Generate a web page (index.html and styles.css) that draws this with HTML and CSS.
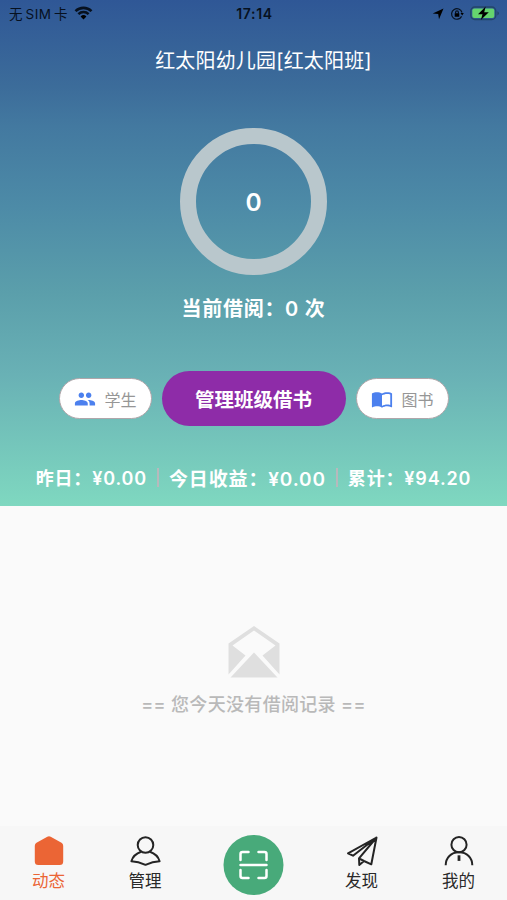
FILE: index.html
```html
<!DOCTYPE html>
<html lang="zh-CN">
<head>
<meta charset="utf-8">
<title>红太阳幼儿园</title>
<link rel="stylesheet" href="styles.css">
</head>
<body>
<div class="app">
  <section class="hero">
    <div class="status">
      <div class="carrier"><span>无 SIM 卡</span>
        <svg class="wifi" viewBox="0 0 18 14"><path d="M9 13.5 6.1 10.5a4.2 4.2 0 0 1 5.8 0Z"/><path class="arc" d="M3.9 8.1a7.4 7.4 0 0 1 10.2 0M1 5.1a11.5 11.5 0 0 1 16 0"/></svg>
      </div>
      <div class="clock">17:14</div>
      <div class="indicators">
        <svg width="12" height="12" viewBox="0 0 12 12"><path d="M11.5.5 7 11.3 6.2 6 .7 5.4Z"/></svg>
        <svg class="lock" width="14" height="14" viewBox="0 0 14 14"><path class="line" d="M11.6 9.4A5.3 5.3 0 1 1 12 5.5M5.6 6.5V5.2a1.4 1.4 0 0 1 2.8 0v1.3"/><path d="M4.7 6.3h4.6v3.5H4.7ZM10.5 6h3.3l-1.6 2.5Z"/></svg>
        <svg class="battery" width="30" height="15" viewBox="0 0 30 15"><rect class="case" x=".8" y="1" width="25" height="12.5" rx="4"/><rect class="charge" x="2.3" y="2.5" width="22" height="9.5" rx="2"/><path class="cap" d="M27.3 5.2q1.7.5 1.7 2.1t-1.7 2.1Z"/><path d="M15.7.5 8 8.3h4.5L10.8 14l8-7.8h-4.6Z"/></svg>
      </div>
    </div>
    <h1>红太阳幼儿园[红太阳班]</h1>
    <div class="ring">0</div>
    <p class="current">当前借阅：0 次</p>
    <div class="actions">
      <div class="pill"><svg width="24" height="24" viewBox="0 0 24 24"><path d="M16 11c1.66 0 2.99-1.34 2.99-3S17.66 5 16 5s-3 1.34-3 3 1.34 3 3 3zm-8 0c1.66 0 2.99-1.34 2.99-3S9.66 5 8 5 5 6.34 5 8s1.34 3 3 3zm0 2c-2.33 0-7 1.17-7 3.5V19h14v-2.5C15 14.17 10.33 13 8 13zm8 0c-.29 0-.62.02-.97.05 1.16.84 1.97 1.97 1.97 3.45V19h6v-2.5c0-2.33-4.67-3.5-7-3.5z"/></svg><span>学生</span></div>
      <div class="primary">管理班级借书</div>
      <div class="pill"><svg width="24" height="24" viewBox="0 0 24 24"><path d="M21 5c-1.11-.35-2.33-.5-3.5-.5-1.95 0-4.05.4-5.5 1.5-1.45-1.1-3.55-1.5-5.5-1.5S2.45 4.9 1 6v14.65c0 .25.25.5.5.5.1 0 .15-.05.25-.05C3.1 20.45 5.05 20 6.5 20c1.95 0 4.05.4 5.5 1.5 1.35-.85 3.8-1.5 5.5-1.5 1.65 0 3.35.3 4.75 1.05.1.05.15.05.25.05.25 0 .5-.25.5-.5V6c-.6-.45-1.25-.75-2-1zm0 13.5c-1.1-.35-2.3-.5-3.5-.5-1.7 0-4.15.65-5.5 1.5V8c1.35-.85 3.8-1.5 5.5-1.5 1.2 0 2.4.15 3.5.5v11.5z"/></svg><span>图书</span></div>
    </div>
    <div class="earnings">
      <span class="yesterday">昨日：¥0.00</span><i></i><span class="today">今日收益：¥0.00</span><i></i><span class="total">累计：¥94.20</span>
    </div>
  </section>
  <main class="empty">
    <svg width="52" height="52" viewBox="0 0 52 52"><path fill-rule="evenodd" d="M26 0 51.5 17.5V48.5L34.5 29.5 47.5 19.5 26 4.5 4.5 19.5 17.5 29.5.5 48.5V17.5Z"/><path d="M26 26.5 49.5 51.5H2.5Z"/></svg>
    <p>== 您今天没有借阅记录 ==</p>
  </main>
  <nav class="tabs">
    <div class="tab active"><svg width="32" height="32" viewBox="0 0 32 32"><path d="M14.3 1.8Q16 .8 17.7 1.8L28.5 7.8Q30.2 8.8 30.2 10.8V26.5Q30.2 30 26.7 30H5.3Q1.8 30 1.8 26.5V10.8Q1.8 8.8 3.5 7.8Z"/></svg><span>动态</span></div>
    <div class="tab"><svg width="32" height="32" viewBox="0 0 32 32"><circle cx="16.5" cy="10" r="7.8"/><path d="M12.2 16.8C7.2 18.4 3.6 22 2.4 26.3Q9.2 26.5 16.5 29.8 23.7 26.5 30.6 26.3C29.4 22 25.8 18.4 20.8 16.8"/></svg><span>管理</span></div>
    <div class="scan"><svg width="32" height="32" viewBox="0 0 32 32"><path d="M3 11V5Q3 3 5 3h6M21 3h6Q29 3 29 5v6M3 21v6Q3 29 5 29h6M21 29h6Q29 29 29 27v-6M3 16h26"/></svg></div>
    <div class="tab"><svg width="32" height="32" viewBox="0 0 32 32"><path d="M30.5 2.5 2 18.3 7 20.7 30.5 2.5 13 23.3 13.3 30 18 26 25.3 29.3ZM13 23.3 18 26"/></svg><span>发现</span></div>
    <div class="tab"><svg width="32" height="32" viewBox="0 0 32 32"><circle cx="16" cy="9.7" r="7.6"/><path d="M2.7 30.3C2.7 22.7 8 17.3 16 17.3S29.3 22.7 29.3 30.3"/><path class="tie" d="M16 20.3v5.6"/></svg><span>我的</span></div>
  </nav>
</div>
</body>
</html>
```
FILE: styles.css
```css
* { box-sizing: border-box; }
body { margin: 0; font-family: Inter, "Noto Sans CJK SC", sans-serif; }
h1, p { margin: 0; }
svg { display: block; flex: none; }
.app { width: 507px; height: 900px; display: flex; flex-direction: column; background: #fafafa; overflow: hidden; }
.hero { height: 506px; flex: none; display: flex; flex-direction: column; align-items: center; color: #fff; background: linear-gradient(#2f5796 0%, #3c6c9a 17%, #4379a0 25%, #4d8ba7 41%, #5b9fab 58%, #69b1b5 74%, #7fd8c0 100%); }
.status { width: 100%; height: 27px; display: grid; grid-template-columns: 1fr auto 1fr; align-items: center; padding: 0 7px 0 9px; color: #07111f; font-size: 14px; }
.carrier { display: flex; align-items: center; gap: 6px; height: 25px; margin-bottom: 2px; white-space: nowrap; font-size: 13.5px; word-spacing: -1.5px; letter-spacing: .4px; }
.wifi { width: 19px; height: 14px; }
.wifi .arc { fill: none; stroke: #07111f; stroke-width: 2.6; }
.clock { font-weight: 600; font-size: 14px; letter-spacing: .7px; }
.indicators { display: flex; justify-content: flex-end; align-items: center; gap: 6px; }
.line { fill: none; stroke: #07111f; stroke-width: 1.2; }
.case { fill: none; stroke: #234669; stroke-width: 1.3; }
.charge { fill: #65d46e; }
.cap { fill: #234669; }
h1 { margin-top: 19px; height: 30px; line-height: 30px; font-size: 20px; font-weight: 400; padding-left: 20px; letter-spacing: .17px; white-space: nowrap; }
.ring { margin-top: 52px; width: 147px; height: 147px; flex: none; border: 16px solid #b9c7cc; border-radius: 50%; display: grid; place-items: center; font-size: 24.5px; font-weight: 600; }
.current { margin-top: 19px; height: 30px; line-height: 30px; font-size: 20px; font-weight: 600; letter-spacing: .7px; white-space: nowrap; }
.actions { margin-top: 47px; display: flex; align-items: center; gap: 10px; }
.pill { width: 93px; height: 41px; border: 1px solid #b0a6aa; border-radius: 21px; background: #fff; display: flex; align-items: center; justify-content: center; gap: 8px; color: #969696; font-size: 16px; padding-left: 1px; }
.pill svg { width: 22px; height: 22px; fill: #4c80ee; }
.primary { width: 184px; height: 55px; border-radius: 28px; background: #8e2ca8; display: grid; place-items: center; font-size: 19.5px; font-weight: 600; }
.earnings { width: 100%; margin-top: 36px; height: 30px; display: flex; align-items: center; justify-content: center; gap: 10px; font-size: 18px; font-weight: 600; letter-spacing: .85px; white-space: nowrap; }
.earnings i { width: 2px; height: 19px; flex: none; background: #b7b9bc; }
.earnings .today { font-size: 19px; }
.empty { flex: 1; padding-top: 120px; display: flex; flex-direction: column; align-items: center; color: #b9b9b9; }
.empty svg { fill: #dfdfdf; }
.empty p { margin-top: 14px; height: 26px; line-height: 26px; font-size: 18px; font-weight: 500; letter-spacing: .32px; white-space: nowrap; }
.tabs { height: 74px; flex: none; background: #f7f7f7; display: grid; grid-template-columns: 97px 96px 120px 97px 97px; justify-items: center; align-items: start; padding-top: 9px; }
.tab { width: 66px; display: flex; flex-direction: column; align-items: center; color: #292929; font-size: 16.5px; }
.tab svg { fill: none; stroke: #242424; stroke-width: 2; stroke-linejoin: round; }
.tab span { height: 26px; line-height: 26px; margin-top: 1px; }
.tab .tie { stroke-width: 2.8; }
.tab.active { color: #eb6535; }
.tab.active svg { fill: #eb6535; stroke: none; }
.scan { width: 60px; height: 60px; border-radius: 50%; background: #48aa7a; display: grid; place-items: center; transform: translateX(.5px); }
.scan svg { fill: none; stroke: #fff; stroke-width: 2.5; stroke-linecap: round; }
```
